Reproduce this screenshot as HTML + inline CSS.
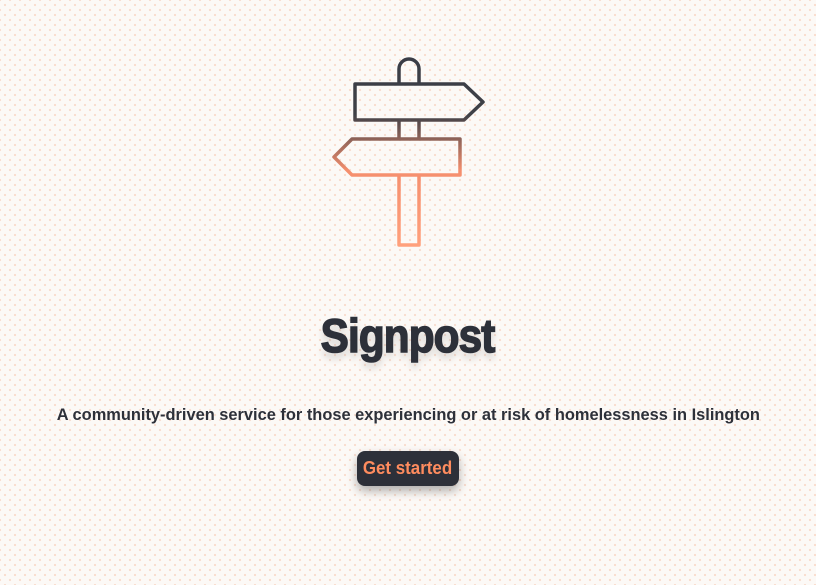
<!DOCTYPE html>
<html><head><style>
html,body{margin:0;width:816px;height:585px;overflow:hidden}
body{background-color:#fcf9f6;background-image:radial-gradient(#f9dccd 1px,transparent 1.3px),radial-gradient(#f9dccd 1px,transparent 1.3px);background-size:10px 10px;background-position:0 0,5px 5px;font-family:"Liberation Sans",sans-serif;color:#2d3039;position:relative}
h1{position:absolute;left:0;width:816px;top:308px;margin:0;text-align:center;font-size:47px;font-weight:bold;letter-spacing:-1px;text-shadow:0 6px 8px rgba(0,0,0,.15);-webkit-text-stroke:1.5px #2d3039}
h1 span{display:inline-block;transform:scaleX(.9)}
p{position:absolute;left:0;width:816px;top:405px;margin:0;text-align:center;font-size:17px;font-weight:bold}
p span{display:inline-block;transform:scaleX(.965);white-space:nowrap}
.btn{position:absolute;left:357px;top:451px;width:102px;height:35px;background:#2d3039;border-radius:8px;color:#ff8c5e;font-weight:bold;font-size:18px;line-height:35px;text-align:center;box-shadow:0 5px 10px rgba(0,0,0,.3)}
.btn span{display:inline-block;transform:scaleX(.94);white-space:nowrap}
</style></head><body>
<svg width="816" height="585" style="position:absolute;left:0;top:0">
<defs><linearGradient id="g" x1="0" y1="58" x2="0" y2="246" gradientUnits="userSpaceOnUse">
<stop offset="0" stop-color="#3a3d46"/><stop offset=".3" stop-color="#3f4046"/><stop offset=".6" stop-color="#f58f6e"/><stop offset="1" stop-color="#ffa07c"/></linearGradient></defs>
<g fill="none" stroke="url(#g)" stroke-width="3.5" stroke-linejoin="round">
<path d="M399 83V69a10 10 0 0 1 20 0V83"/>
<path d="M355 84H464L483 102L464 120H355Z"/>
<path d="M399 120V139M419 120V139"/>
<path d="M460 139H352L334 157L352 175H460Z"/>
<path d="M399 175V245H419V175"/>
</g></svg>
<h1><span>Signpost</span></h1>
<p><span>A community-driven service for those experiencing or at risk of homelessness in Islington</span></p>
<div class="btn"><span>Get started</span></div>
</body></html>
